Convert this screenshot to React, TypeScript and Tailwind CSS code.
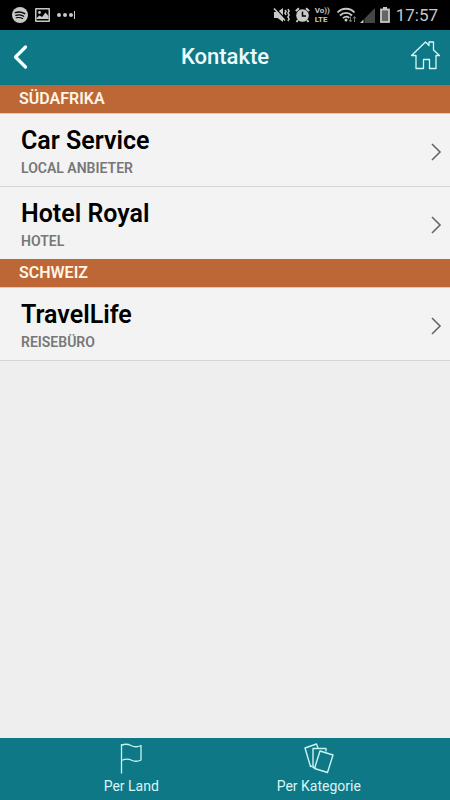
import type { ReactNode } from 'react';

type Contact = { name: string; type: string };
type Section = { country: string; contacts: Contact[] };

const sections: Section[] = [
  {
    country: 'Südafrika',
    contacts: [
      { name: 'Car Service', type: 'Local Anbieter' },
      { name: 'Hotel Royal', type: 'Hotel' },
    ],
  },
  {
    country: 'Schweiz',
    contacts: [{ name: 'TravelLife', type: 'Reisebüro' }],
  },
];

function StatusBar() {
  return (
    <div className="flex h-[30px] items-center justify-between bg-black px-3 text-[#c8c8c8]">
      <div className="flex items-center gap-[7px]">
        {/* Spotify */}
        <svg width="16" height="16" viewBox="0 0 16 16" fill="none" stroke="#000" strokeLinecap="round">
          <circle cx="8" cy="8" r="8" fill="#c8c8c8" stroke="none" />
          <path d="M3.3 5.6c3-.9 6.700-.6 9.400 1" strokeWidth="1.500" />
          <path d="M3.800 8.300c2.600-.8 5.600-.4 7.900.9" strokeWidth="1.300" />
          <path d="M4.200 10.800c2.200-.6 4.500-.3 6.500.8" strokeWidth="1.100" />
        </svg>
        {/* Gallery */}
        <svg width="15" height="14" viewBox="0 0 15 14" fill="#c8c8c8">
          <path fillRule="evenodd" d="M1 0h13a1 1 0 0 1 1 1v12a1 1 0 0 1-1 1H1a1 1 0 0 1-1-1V1a1 1 0 0 1 1-1zM1.500 1.500v11h12v-11z" />
          <circle cx="4.500" cy="4.500" r="1.400" />
          <path d="M1.500 10l3-2.500 2.500 1.500L10.500 4.500 13.500 8v3h-12z" />
        </svg>
        {/* More notifications */}
        <svg width="19" height="10" viewBox="0 0 19 10" fill="#c8c8c8">
          <circle cx="2" cy="5" r="2" />
          <circle cx="8" cy="5" r="2" />
          <circle cx="14" cy="5" r="2" />
          <path d="M17 1h1v8h-1z" />
        </svg>
      </div>

      <div className="flex items-center">
        {/* Muted with vibration */}
        <svg className="mr-[5px]" width="17" height="16" viewBox="0 0 17 16" fill="#c8c8c8">
          <path d="M1 5h3.500L10 1v14l-5.500-4H1z" />
          <path d="M2 1l11 11.500" stroke="#000" strokeWidth="1.500" />
          <path d="M1 1.500l11 12" stroke="#c8c8c8" strokeWidth="1.600" />
          <path d="M12 3l1 1.500-1 1.500 1 2M15 2l1 2-1 2 1 2-1 2 1 2-1 2" fill="none" stroke="#c8c8c8" strokeWidth="1.600" />
        </svg>
        {/* Alarm */}
        <svg className="mr-[5px]" width="15" height="16" viewBox="0 0 15 16" fill="none" stroke="#c8c8c8">
          <circle cx="7.500" cy="8.500" r="6.300" fill="#c8c8c8" stroke="none" />
          <path d="M.8 4L4 1.200M14.200 4L11 1.200M3 13l-1.500 2M12 13l1.500 2" strokeWidth="2" />
          <path d="M7.500 4.500v4.500H11" stroke="#000" strokeWidth="1.500" />
        </svg>
        <div className="mr-[7px] flex w-[15px] flex-col text-[8px] font-bold leading-[9px]">
          <span className="whitespace-nowrap">Vo))</span>
          <span>LTE</span>
        </div>
        {/* Wi-Fi with traffic arrows */}
        <svg className="mr-[3px]" width="20" height="16" viewBox="0 0 20 16" fill="none" stroke="#c8c8c8" strokeWidth="1.800">
          <path d="M.5 5.500c4.500-5 12.500-5 17 0M3 8.500c3.500-3.600 8.500-3.600 12 0M6 11.200c2-1.800 4.500-1.800 6.300-.3" />
          <circle cx="9" cy="13" r="1.500" fill="#c8c8c8" stroke="none" />
          <path d="M13.500 9.500v5M12 13l1.500 2 1.500-2M17.500 15v-5M16 11.500l1.500-2 1.500 2" stroke="#777" strokeWidth="1" />
        </svg>
        {/* Mobile signal */}
        <svg className="mr-[5px]" width="15" height="15" viewBox="0 0 15 15">
          <path d="M15 0v15H4.500v-4.500z" fill="#454545" />
          <path d="M3.500 11.500V15H0z" fill="#c8c8c8" />
        </svg>
        {/* Battery */}
        <svg className="mr-[6px]" width="10" height="16" viewBox="0 0 10 16">
          <path d="M3 0h4v2H3z" fill="#c8c8c8" />
          <rect x="1" y="2.500" width="8" height="12.500" fill="#666" stroke="#c8c8c8" strokeWidth="1.800" />
        </svg>
        <time className="text-[17px] leading-[30px]">17:57</time>
      </div>
    </div>
  );
}

function Header() {
  return (
    <header className="grid h-[55px] grid-cols-[1fr_auto_1fr] items-center bg-[#0e7887] px-[9px] pb-[2px] text-white">
      <button type="button" aria-label="Zurück" className="justify-self-start pl-[3px]">
        <svg width="16" height="26" viewBox="0 0 16 26" fill="none" stroke="#f4ffff" strokeWidth="3.300" strokeLinecap="round" strokeLinejoin="round">
          <path d="M13.500 3L3.500 13l10 10" />
        </svg>
      </button>
      <h1 className="text-[22px] font-medium leading-7 text-[#eefdfd]">Kontakte</h1>
      <a href="#home" aria-label="Startseite" className="justify-self-end pb-1">
        <svg width="31" height="30" viewBox="0 0 31 30" fill="none" stroke="#d5f8f8" strokeWidth="1.300" strokeLinejoin="round">
          <path d="M1.500 15.500L15.500 2l3.500 3.500V2h4.500v8l6 5.500H26V28.500h-6.500V19.500h-6v9H6V15.500z" />
        </svg>
      </a>
    </header>
  );
}

function ContactRow({ name, type }: Contact) {
  return (
    <li>
      <a href="#contact" className="flex h-[72px] items-center justify-between bg-[#f3f3f3] pl-[21px] pr-2">
        <div className="pt-[5px]">
          <div className="text-[25px] font-semibold leading-[30px] text-black">{name}</div>
          <div className="text-sm font-semibold uppercase leading-6 text-[#777]">{type}</div>
        </div>
        <svg className="mt-1" width="12" height="18" viewBox="0 0 12 18" fill="none" stroke="#666" strokeWidth="1.600">
          <path d="M2 1l8 8-8 8" />
        </svg>
      </a>
    </li>
  );
}

function Tab({ label, children }: { label: string; children: ReactNode }) {
  return (
    <button type="button" className="flex w-5/12 flex-col items-center pt-1 text-[#d9f5f5]">
      {children}
      <span className="text-sm leading-5">{label}</span>
    </button>
  );
}

export default function App() {
  return (
    <div className="flex min-h-screen flex-col bg-[#eee] font-[Roboto,sans-serif]">
      <StatusBar />
      <Header />

      <main className="flex-1">
        <div className="border-b border-[#d4d4d4]">
          {sections.map((section) => (
            <section key={section.country}>
              <h2 className="h-[29px] border-b border-[#e2c6b5] bg-[#bd6736] pl-[19px] text-base font-semibold uppercase leading-[27px] text-[#fff5e6]">
                {section.country}
              </h2>
              <ul className="divide-y divide-[#d4d4d4]">
                {section.contacts.map((contact) => (
                  <ContactRow key={contact.name} {...contact} />
                ))}
              </ul>
            </section>
          ))}
        </div>
      </main>

      <nav className="flex h-[62px] justify-center bg-[#0e7887]">
        <Tab label="Per Land">
          <svg width="24" height="34" viewBox="0 0 24 34" fill="none" stroke="#c9f3f3" strokeWidth="1.300" strokeLinejoin="round">
            <path d="M2.500 2v29.500M2.500 3.500C6 1.500 9 2 12 3.500s6 2 10 0v14.500c-4 2-7 1.500-10 0s-6-1-9.500.5" />
          </svg>
        </Tab>
        <Tab label="Per Kategorie">
          <svg width="30" height="34" viewBox="0 0 30 34" fill="none" stroke="#c9f3f3" strokeWidth="1.400" strokeLinejoin="round">
            <path d="M8.500 24l-2 .5L1 6l11.500-4 1.500 4" />
            <path d="M11.500 25.500H9V6.500h13v3" />
            <path d="M16 9l13 4-5.500 17.500-13-4z" />
          </svg>
        </Tab>
      </nav>
    </div>
  );
}
